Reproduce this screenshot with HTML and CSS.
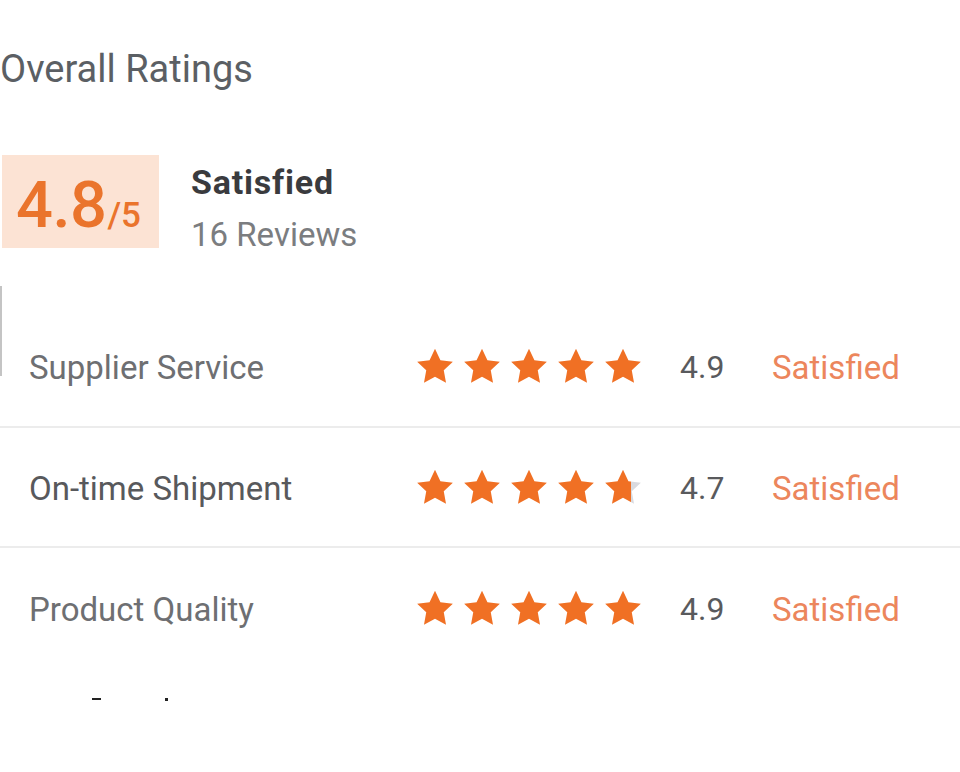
FILE: index.html
```html
<!DOCTYPE html>
<html lang="en">
<head>
<meta charset="utf-8">
<title>Overall Ratings</title>
<link rel="stylesheet" href="styles.css">
</head>
<body>
<svg width="0" height="0" class="defs" aria-hidden="true">
  <defs>
    <linearGradient id="part70" x1="0" x2="1" y1="0" y2="0">
      <stop offset="0.72" stop-color="#f07024"/>
      <stop offset="0.72" stop-color="#d9dadf"/>
    </linearGradient>
    <polygon id="star" points="12,1.6 15.1,8.1 22.2,9 17,13.9 18.3,21 12,17.6 5.7,21 7,13.9 1.8,9 8.9,8.1"/>
  </defs>
</svg>
<main class="page">
  <h1 class="title">Overall Ratings</h1>
  <section class="summary">
    <div class="score"><span class="score-big">4.8</span><span class="score-max">/5</span></div>
    <div class="summary-text">
      <div class="summary-label">Satisfied</div>
      <div class="summary-count">16 Reviews</div>
    </div>
  </section>
  <section class="rows">
    <div class="row">
      <span class="label">Supplier Service</span>
      <span class="stars">
        <svg viewBox="0 0 24 24"><use href="#star"/></svg>
        <svg viewBox="0 0 24 24"><use href="#star"/></svg>
        <svg viewBox="0 0 24 24"><use href="#star"/></svg>
        <svg viewBox="0 0 24 24"><use href="#star"/></svg>
        <svg viewBox="0 0 24 24"><use href="#star"/></svg>
      </span>
      <span class="value">4.9</span>
      <span class="verdict">Satisfied</span>
    </div>
    <div class="row">
      <span class="label dark">On-time Shipment</span>
      <span class="stars">
        <svg viewBox="0 0 24 24"><use href="#star"/></svg>
        <svg viewBox="0 0 24 24"><use href="#star"/></svg>
        <svg viewBox="0 0 24 24"><use href="#star"/></svg>
        <svg viewBox="0 0 24 24"><use href="#star"/></svg>
        <svg viewBox="0 0 24 24" class="partial"><use href="#star"/></svg>
      </span>
      <span class="value">4.7</span>
      <span class="verdict">Satisfied</span>
    </div>
    <div class="row">
      <span class="label">Product Quality</span>
      <span class="stars">
        <svg viewBox="0 0 24 24"><use href="#star"/></svg>
        <svg viewBox="0 0 24 24"><use href="#star"/></svg>
        <svg viewBox="0 0 24 24"><use href="#star"/></svg>
        <svg viewBox="0 0 24 24"><use href="#star"/></svg>
        <svg viewBox="0 0 24 24"><use href="#star"/></svg>
      </span>
      <span class="value">4.9</span>
      <span class="verdict">Satisfied</span>
    </div>
  </section>
  <div class="cut"><span class="dash"></span><span class="dot"></span></div>
</main>
</body>
</html>
```
FILE: styles.css
```css
* { box-sizing: border-box; }
html, body { margin: 0; padding: 0; background: #fff; }
body {
  font-family: Roboto, "Liberation Sans", Arial, sans-serif;
  width: 960px;
  height: 772px;
  overflow: hidden;
}
.defs { position: absolute; width: 0; height: 0; }
.page { padding-top: 47px; }
.title {
  margin: 0;
  font-size: 38px;
  line-height: 44px;
  font-weight: 400;
  color: #5b5f64;
}
.summary {
  display: flex;
  align-items: flex-start;
  height: 93px;
  margin-top: 64px;
  padding-left: 2px;
}
.score {
  width: 157px;
  height: 93px;
  background: #fce3d4;
  color: #ea742c;
  display: flex;
  align-items: baseline;
  padding: 0 0 0 14px;
}
.score-big {
  font-size: 65px;
  font-weight: 500;
  line-height: 101px;
  letter-spacing: -0.5px;
}
.score-max {
  font-size: 35px;
  font-weight: 500;
  margin-left: 1px;
}
.summary-text {
  margin-left: 32px;
  padding-top: 7px;
}
.summary-label {
  font-size: 34px;
  font-weight: 700;
  line-height: 40px;
  color: #3a3b3e;
  letter-spacing: 0.8px;
}
.summary-count {
  font-size: 33px;
  line-height: 44px;
  color: #7b7d80;
  margin-top: 11px;
}
.rows {
  position: relative;
  margin-top: 38px;
  padding-top: 22px;
}
.rows::before {
  content: "";
  position: absolute;
  left: 0;
  top: 0;
  width: 2px;
  height: 90px;
  background: #c4c4c4;
}
.row {
  display: flex;
  align-items: center;
  height: 120px;
  padding-left: 29px;
  padding-top: 2px;
  border-bottom: 2px solid #ececec;
}
.row:first-child { padding-top: 0; }
.row:last-child { border-bottom: none; }
.label {
  width: 385px;
  font-size: 33px;
  color: #6e6f72;
}
.label.dark { color: #58595c; }
.stars {
  display: flex;
  gap: 5px;
  width: 266px;
}
.stars svg {
  width: 42px;
  height: 42px;
  fill: #f07024;
  display: block;
}
.stars svg.partial { fill: url(#part70); }
.value {
  width: 92px;
  font-size: 32px;
  color: #595a5d;
}
.verdict {
  font-size: 33px;
  color: #ec865c;
}
.cut {
  display: flex;
  align-items: center;
  margin-top: 29px;
  height: 4px;
}
.dash {
  width: 9px;
  height: 2px;
  background: #222;
  margin-left: 92px;
}
.dot {
  width: 3px;
  height: 3px;
  background: #222;
  margin-left: 64px;
}
```
